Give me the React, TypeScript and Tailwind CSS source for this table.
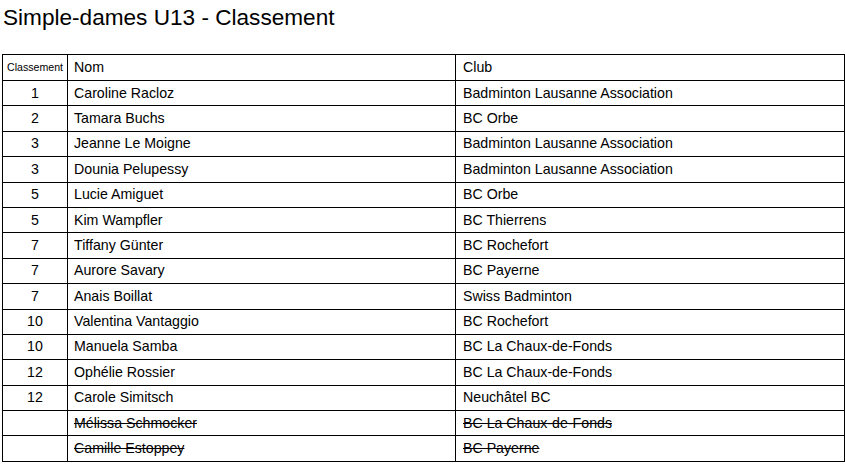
import React from "react";

type Row = { rank?: string; name: string; club: string; withdrawn?: boolean };

const rows: Row[] = [
  { rank: "1", name: "Caroline Racloz", club: "Badminton Lausanne Association" },
  { rank: "2", name: "Tamara Buchs", club: "BC Orbe" },
  { rank: "3", name: "Jeanne Le Moigne", club: "Badminton Lausanne Association" },
  { rank: "3", name: "Dounia Pelupessy", club: "Badminton Lausanne Association" },
  { rank: "5", name: "Lucie Amiguet", club: "BC Orbe" },
  { rank: "5", name: "Kim Wampfler", club: "BC Thierrens" },
  { rank: "7", name: "Tiffany Günter", club: "BC Rochefort" },
  { rank: "7", name: "Aurore Savary", club: "BC Payerne" },
  { rank: "7", name: "Anais Boillat", club: "Swiss Badminton" },
  { rank: "10", name: "Valentina Vantaggio", club: "BC Rochefort" },
  { rank: "10", name: "Manuela Samba", club: "BC La Chaux-de-Fonds" },
  { rank: "12", name: "Ophélie Rossier", club: "BC La Chaux-de-Fonds" },
  { rank: "12", name: "Carole Simitsch", club: "Neuchâtel BC" },
  { name: "Mélissa Schmocker", club: "BC La Chaux-de-Fonds", withdrawn: true },
  { name: "Camille Estoppey", club: "BC Payerne", withdrawn: true },
];

export default function App() {
  return (
    <div className="w-[845px] h-[464px] bg-white text-black font-['Liberation_Sans',Arial,sans-serif] overflow-hidden">
      <h1 className="ml-[3px] pt-[5px] text-[22.6px] leading-[25px] font-normal">
        Simple-dames U13 - Classement
      </h1>
      <table className="ml-[2px] mt-[24px] w-[843px] border-collapse table-fixed text-[14.2px]">
        <colgroup>
          <col className="w-[65px]" />
          <col className="w-[388px]" />
          <col />
        </colgroup>
        <thead>
          <tr className="h-[26px]">
            <th className="border border-black text-[10.6px] font-normal text-center px-0">Classement</th>
            <th className="border border-black font-normal text-left pl-[6px]">Nom</th>
            <th className="border border-black font-normal text-left pl-[7px]">Club</th>
          </tr>
        </thead>
        <tbody>
          {rows.map((r, i) => (
            <tr key={i} className="h-[25.4px]">
              <td className="border border-black text-center">{r.rank ?? ""}</td>
              <td className={`border border-black pl-[6px] ${r.withdrawn ? "line-through" : ""}`}>{r.name}</td>
              <td className={`border border-black pl-[7px] ${r.withdrawn ? "line-through" : ""}`}>{r.club}</td>
            </tr>
          ))}
        </tbody>
      </table>
    </div>
  );
}
